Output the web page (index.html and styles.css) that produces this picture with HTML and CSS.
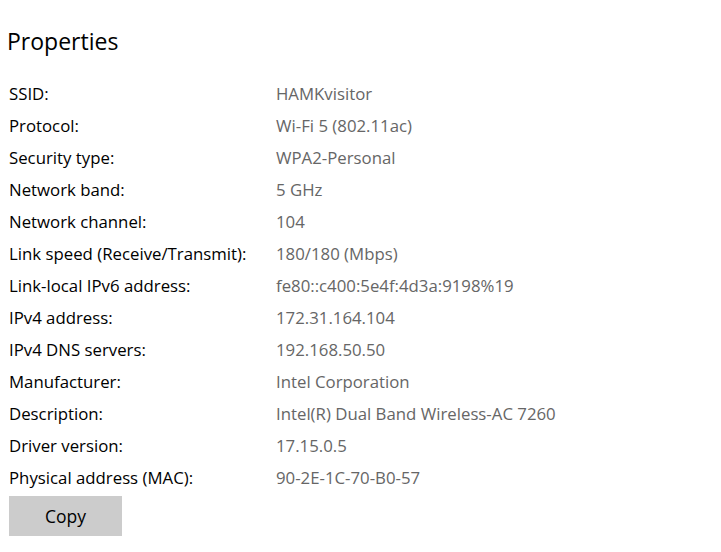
FILE: index.html
```html
<!DOCTYPE html>
<html>
<head>
<meta charset="utf-8">
<link rel="stylesheet" href="styles.css">
</head>
<body>
<div class="page">
  <h1 class="title">Properties</h1>
  <div class="props">
    <div class="label">SSID:</div><div class="value">HAMKvisitor</div>
    <div class="label">Protocol:</div><div class="value">Wi-Fi 5 (802.11ac)</div>
    <div class="label">Security type:</div><div class="value">WPA2-Personal</div>
    <div class="label">Network band:</div><div class="value">5 GHz</div>
    <div class="label">Network channel:</div><div class="value">104</div>
    <div class="label">Link speed (Receive/Transmit):</div><div class="value">180/180 (Mbps)</div>
    <div class="label">Link-local IPv6 address:</div><div class="value">fe80::c400:5e4f:4d3a:9198%19</div>
    <div class="label">IPv4 address:</div><div class="value">172.31.164.104</div>
    <div class="label">IPv4 DNS servers:</div><div class="value">192.168.50.50</div>
    <div class="label">Manufacturer:</div><div class="value">Intel Corporation</div>
    <div class="label">Description:</div><div class="value">Intel(R) Dual Band Wireless-AC 7260</div>
    <div class="label">Driver version:</div><div class="value">17.15.0.5</div>
    <div class="label">Physical address (MAC):</div><div class="value">90-2E-1C-70-B0-57</div>
  </div>
  <button class="copy">Copy</button>
</div>
</body>
</html>
```

FILE: styles.css
```css
html, body {
  margin: 0;
  padding: 0;
  background: #ffffff;
}
body {
  font-family: "Open Sans", "Noto Sans", sans-serif;
  color: #000000;
}
.page {
  padding: 24px 0 0 9px;
}
.title {
  margin: 0 0 0 -2px;
  font-size: 23px;
  font-weight: 400;
  line-height: 34px;
  height: 34px;
}
.props {
  margin-top: 20px;
  display: grid;
  grid-template-columns: 267px auto;
  grid-auto-rows: 32px;
  font-size: 16.8px;
  line-height: 32px;
}
.label {
  color: #000000;
}
.value {
  color: #666666;
}
.copy {
  display: block;
  margin-top: 2px;
  width: 113px;
  height: 40px;
  border: none;
  background: #cccccc;
  font-family: "Open Sans", "Noto Sans", sans-serif;
  font-size: 17.5px;
  color: #000000;
  padding: 0;
}
```
